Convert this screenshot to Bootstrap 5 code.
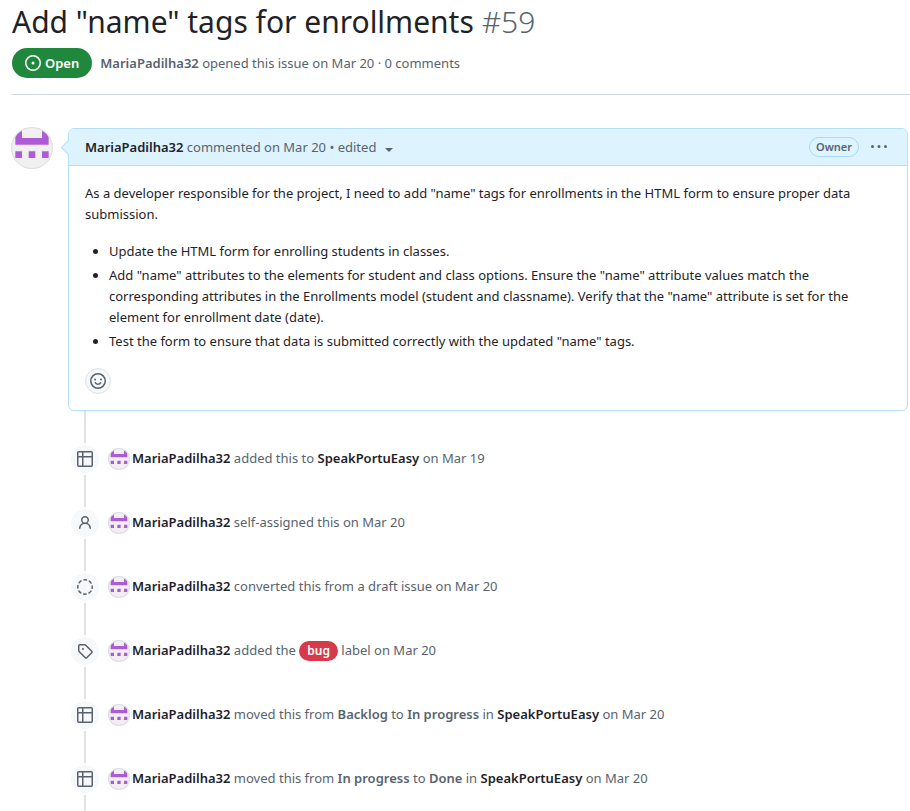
<!DOCTYPE html>
<html lang="en">
<head>
<meta charset="utf-8">
<meta name="viewport" content="width=device-width, initial-scale=1">
<title>Add "name" tags for enrollments · Issue #59</title>
<link href="https://cdn.jsdelivr.net/npm/bootstrap@5.3.0/dist/css/bootstrap.min.css" rel="stylesheet">
<style>
  :root { --ink: #1f2328; --muted: #59636e; --line: #d0d7de; --blue-line: #b6dffe; --blue-bg: #ddf4ff; }
  body { font-family: "Noto Sans", "Open Sans", sans-serif; font-size: 13px; line-height: 21px; color: var(--ink); }
  a { color: inherit; text-decoration: none; }
  a:hover { text-decoration: underline; }
  .muted { color: var(--muted); }
  .strong { font-weight: 600; color: var(--ink); }
  .semi { font-weight: 600; }
  svg { fill: currentColor; flex-shrink: 0; }
  .issue-head { padding-left: 12px; }
  .issue-title { font-size: 30px; line-height: 44px; font-weight: 400; }
  .issue-number { font-weight: 300; color: var(--muted); }
  .issue-meta { padding: 4px 0 16px; border-bottom: 1px solid var(--line); }
  .state { background: #1f883d; color: #fff; font-weight: 600; line-height: 20px; padding: 5px 13px; }
  .discussion { padding: 33px 2px 0 68px; }
  .discussion::before { content: ""; position: absolute; left: 84px; top: 33px; bottom: 0; width: 2px; background: #dfe3e8; }
  .avatar { border-radius: 50%; background: #f0f0f0; box-shadow: 0 0 0 1px #dcdddf; color: #b05bd6; }
  .avatar-main { position: absolute; left: 12px; top: 33px; }
  .comment { border: 1px solid var(--blue-line); border-radius: 6px; background: #fff; margin-bottom: 16px; }
  .comment-head { background: var(--blue-bg); border-bottom: 1px solid var(--blue-line); border-radius: 5px 5px 0 0; padding: 4px 16px; min-height: 37px; }
  .comment-head::before { content: ""; position: absolute; left: -6px; top: 13px; width: 11px; height: 11px; background: var(--blue-bg); border: solid var(--blue-line); border-width: 0 0 1px 1px; transform: rotate(45deg); }
  .plain { border: 0; background: none; padding: 0; color: var(--muted); }
  .caret { display: inline-block; border: 4px solid transparent; border-top-color: currentColor; border-bottom: 0; margin-left: 5px; }
  .owner { border: 1px solid #a8d8ff; color: var(--muted); font-size: 11px; line-height: 18px; font-weight: 600; padding: 0 6px; }
  .comment-body { padding: 17px 16px 16px; }
  .comment-body ul { padding-left: 24px; }
  .comment-body li + li { margin-top: 3px; }
  .react { width: 26px; height: 26px; border: 1px solid #dfe3e8; background: #f6f8fa; color: var(--muted); padding: 0; }
  .event { padding: 16px 0; gap: 8px; margin-left: 1px; }
  .event-icon { width: 32px; height: 32px; border: 2px solid #fff; background: #f6f8fa; background-clip: padding-box; color: var(--muted); flex-shrink: 0; }
  .event-text { gap: 3px; }
  .event-text > div { padding-bottom: 2px; }
  .bug { background: #d73a4a; color: #fff; font-size: 12px; line-height: 20px; font-weight: 600; padding: 0 8px; display: inline-block; }
</style>
</head>
<body>
<svg class="d-none" aria-hidden="true">
  <symbol id="face" viewBox="0 0 12 12"><path d="M1 1h2v2h6V1h2v4H1zM1 7h2v2H1zM5 7h2v2H5zM9 7h2v2H9z"/></symbol>
  <symbol id="table" viewBox="0 0 16 16"><path d="M0 1.75C0 .784.784 0 1.75 0h12.5C15.216 0 16 .784 16 1.75v12.5A1.75 1.75 0 0 1 14.25 16H1.75A1.75 1.75 0 0 1 0 14.25ZM6.5 6.5v8h7.75a.25.25 0 0 0 .25-.25V6.5Zm8-1.5V1.75a.25.25 0 0 0-.25-.25H6.5V5Zm-13 1.5v7.75c0 .138.112.25.25.25H5v-8ZM5 5V1.5H1.75a.25.25 0 0 0-.25.25V5Z"/></symbol>
  <symbol id="person" viewBox="0 0 16 16"><path d="M10.561 8.073a6.005 6.005 0 0 1 3.432 5.142.75.75 0 1 1-1.498.07 4.5 4.5 0 0 0-8.99 0 .75.75 0 0 1-1.498-.07 6.004 6.004 0 0 1 3.431-5.142 3.999 3.999 0 1 1 5.123 0ZM10.5 5a2.5 2.5 0 1 0-5 0 2.5 2.5 0 0 0 5 0Z"/></symbol>
  <symbol id="draft" viewBox="0 0 16 16"><circle cx="8" cy="8" r="7.2" fill="none" stroke="currentColor" stroke-width="1.5" stroke-linecap="round" stroke-dasharray="2.6 3.055" stroke-dashoffset="1.3"/></symbol>
  <symbol id="tag" viewBox="0 0 16 16"><path d="M1 7.775V2.75C1 1.784 1.784 1 2.75 1h5.025c.464 0 .91.184 1.238.513l6.25 6.25a1.75 1.75 0 0 1 0 2.474l-5.026 5.026a1.75 1.75 0 0 1-2.474 0l-6.25-6.25A1.752 1.752 0 0 1 1 7.775Zm1.5 0c0 .066.026.13.073.177l6.25 6.25a.25.25 0 0 0 .354 0l5.025-5.025a.25.25 0 0 0 0-.354l-6.25-6.25a.25.25 0 0 0-.177-.073H2.75a.25.25 0 0 0-.25.25ZM6 5a1 1 0 1 1 0 2 1 1 0 0 1 0-2Z"/></symbol>
</svg>

<header class="issue-head">
  <h1 class="issue-title mb-0">Add "name" tags for enrollments <span class="issue-number">#59</span></h1>
  <div class="issue-meta d-flex align-items-center gap-2">
    <span class="state rounded-pill d-inline-flex align-items-center gap-1">
      <svg width="16" height="16" viewBox="0 0 16 16" aria-hidden="true"><path d="M8 9.5a1.5 1.5 0 1 0 0-3 1.5 1.5 0 0 0 0 3Z"/><path d="M8 0a8 8 0 1 1 0 16A8 8 0 0 1 8 0ZM1.5 8a6.5 6.5 0 1 0 13 0 6.5 6.5 0 0 0-13 0Z"/></svg>
      Open
    </span>
    <span class="muted"><a href="#" class="semi">MariaPadilha32</a> opened this issue on Mar 20 · 0 comments</span>
  </div>
</header>

<main class="discussion position-relative">
  <svg class="avatar avatar-main" width="40" height="40" role="img" aria-label="MariaPadilha32"><use href="#face"/></svg>
  <article class="comment position-relative">
    <div class="comment-head position-relative d-flex align-items-center">
      <div class="muted flex-grow-1"><a href="#" class="strong">MariaPadilha32</a> commented on Mar 20 • <button type="button" class="plain">edited <span class="caret"></span></button></div>
      <span class="owner rounded-pill">Owner</span>
      <button type="button" class="plain d-flex ms-2 px-1" aria-label="Comment options"><svg width="16" height="16" viewBox="0 0 16 16"><path d="M8 9a1.5 1.5 0 1 0 0-3 1.5 1.5 0 0 0 0 3ZM1.5 9a1.5 1.5 0 1 0 0-3 1.5 1.5 0 0 0 0 3Zm13 0a1.5 1.5 0 1 0 0-3 1.5 1.5 0 0 0 0 3Z"/></svg></button>
    </div>
    <div class="comment-body">
      <p class="mb-3">As a developer responsible for the project, I need to add "name" tags for enrollments in the HTML form to ensure proper data submission.</p>
      <ul class="mb-3">
        <li>Update the HTML form for enrolling students in classes.</li>
        <li>Add "name" attributes to the elements for student and class options. Ensure the "name" attribute values match the corresponding attributes in the Enrollments model (student and classname). Verify that the "name" attribute is set for the element for enrollment date (date).</li>
        <li>Test the form to ensure that data is submitted correctly with the updated "name" tags.</li>
      </ul>
      <button type="button" class="react rounded-circle d-flex align-items-center justify-content-center" aria-label="Add reaction"><svg width="16" height="16" viewBox="0 0 16 16"><path d="M8 0a8 8 0 1 1 0 16A8 8 0 0 1 8 0ZM1.5 8a6.5 6.5 0 1 0 13 0 6.5 6.5 0 0 0-13 0Z"/><circle cx="5" cy="6.5" r="1"/><circle cx="11" cy="6.5" r="1"/><path d="M5.3 9.8C6 10.800 6.900 11.300 8 11.300s2-.5 2.700-1.500" fill="none" stroke="currentColor" stroke-width="1.5" stroke-linecap="round"/></svg></button>
    </div>
  </article>

  <div class="event position-relative d-flex align-items-center">
    <span class="event-icon rounded-circle d-flex align-items-center justify-content-center"><svg width="16" height="16"><use href="#table"/></svg></span>
    <div class="event-text d-flex align-items-center"><svg class="avatar" width="20" height="20"><use href="#face"/></svg><div class="muted"><a href="#" class="strong">MariaPadilha32</a> added this to <a href="#" class="strong">SpeakPortuEasy</a> on Mar 19</div></div>
  </div>
  <div class="event position-relative d-flex align-items-center">
    <span class="event-icon rounded-circle d-flex align-items-center justify-content-center"><svg width="16" height="16"><use href="#person"/></svg></span>
    <div class="event-text d-flex align-items-center"><svg class="avatar" width="20" height="20"><use href="#face"/></svg><div class="muted"><a href="#" class="strong">MariaPadilha32</a> self-assigned this on Mar 20</div></div>
  </div>
  <div class="event position-relative d-flex align-items-center">
    <span class="event-icon rounded-circle d-flex align-items-center justify-content-center"><svg width="16" height="16"><use href="#draft"/></svg></span>
    <div class="event-text d-flex align-items-center"><svg class="avatar" width="20" height="20"><use href="#face"/></svg><div class="muted"><a href="#" class="strong">MariaPadilha32</a> converted this from a draft issue on Mar 20</div></div>
  </div>
  <div class="event position-relative d-flex align-items-center">
    <span class="event-icon rounded-circle d-flex align-items-center justify-content-center"><svg width="16" height="16"><use href="#tag"/></svg></span>
    <div class="event-text d-flex align-items-center"><svg class="avatar" width="20" height="20"><use href="#face"/></svg><div class="muted"><a href="#" class="strong">MariaPadilha32</a> added the <a href="#" class="bug rounded-pill">bug</a> label on Mar 20</div></div>
  </div>
  <div class="event position-relative d-flex align-items-center">
    <span class="event-icon rounded-circle d-flex align-items-center justify-content-center"><svg width="16" height="16"><use href="#table"/></svg></span>
    <div class="event-text d-flex align-items-center"><svg class="avatar" width="20" height="20"><use href="#face"/></svg><div class="muted"><a href="#" class="strong">MariaPadilha32</a> moved this from <span class="semi">Backlog</span> to <span class="semi">In progress</span> in <a href="#" class="strong">SpeakPortuEasy</a> on Mar 20</div></div>
  </div>
  <div class="event position-relative d-flex align-items-center">
    <span class="event-icon rounded-circle d-flex align-items-center justify-content-center"><svg width="16" height="16"><use href="#table"/></svg></span>
    <div class="event-text d-flex align-items-center"><svg class="avatar" width="20" height="20"><use href="#face"/></svg><div class="muted"><a href="#" class="strong">MariaPadilha32</a> moved this from <span class="semi">In progress</span> to <span class="semi">Done</span> in <a href="#" class="strong">SpeakPortuEasy</a> on Mar 20</div></div>
  </div>
</main>
<script src="https://cdn.jsdelivr.net/npm/bootstrap@5.3.0/dist/js/bootstrap.bundle.min.js"></script>
</body>
</html>
